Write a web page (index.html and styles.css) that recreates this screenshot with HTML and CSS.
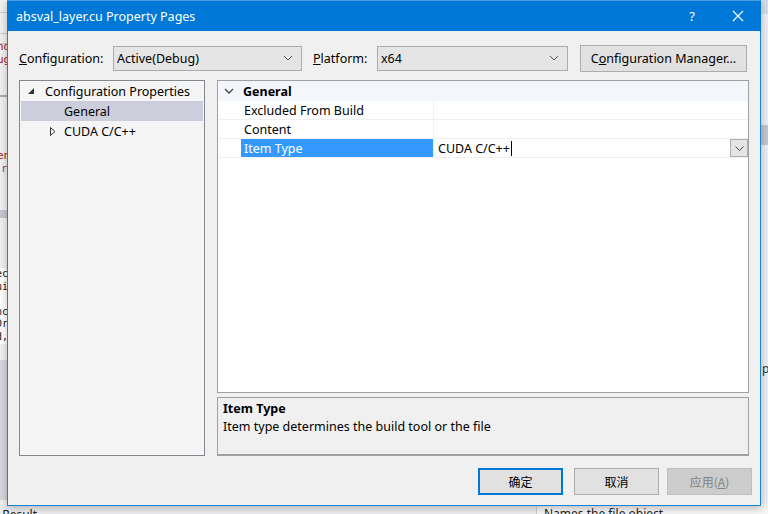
FILE: index.html
```html
<!DOCTYPE html>
<html>
<head>
<meta charset="utf-8">
<link rel="stylesheet" href="styles.css">
</head>
<body>
<div class="desktop">
  <div class="bg-left">
    <div class="bl-line l1"></div>
    <div class="bl-text red t1">nd</div>
    <div class="bl-text red t2">ug</div>
    <div class="bl-line l2"></div>
    <div class="bl-line l3"></div>
    <div class="bl-text red t3">en</div>
    <div class="bl-text purple t4">r</div>
    <div class="bl-bar b1"></div>
    <div class="bl-line l4"></div>
    <div class="bl-code">ec<br>ui<br><br>nc<br>Dr<br>d,</div>
    <div class="bl-gray"></div>
  </div>
  <div class="bg-right">
    <div class="br-top"></div>
    <div class="br-bar"></div>
    <div class="br-text">p</div>
  </div>
  <div class="bg-bottom">
    <span class="bb-left">l Result</span>
    <span class="bb-right">Names the file object</span>
  </div>

  <div class="dialog">
    <div class="titlebar">
      <span class="title">absval_layer.cu Property Pages</span>
      <span class="tb-help">?</span>
      <span class="tb-close"><svg width="12" height="12" viewBox="0 0 12 12"><path d="M1 1L11 11M11 1L1 11" stroke="#fff" stroke-width="1.1" fill="none"/></svg></span>
    </div>

    <div class="toolbar">
      <span class="label"><u>C</u>onfiguration:</span>
      <div class="combo combo-config"><span>Active(Debug)</span><svg class="chev" width="10" height="6" viewBox="0 0 10 6"><path d="M1 1L5 5L9 1" stroke="#555" fill="none"/></svg></div>
      <span class="label label-plat"><u>P</u>latform:</span>
      <div class="combo combo-plat"><span>x64</span><svg class="chev" width="10" height="6" viewBox="0 0 10 6"><path d="M1 1L5 5L9 1" stroke="#555" fill="none"/></svg></div>
      <div class="btn btn-cm">C<u>o</u>nfiguration Manager...</div>
    </div>

    <div class="main">
      <div class="tree">
        <div class="tree-item"><svg class="tri" width="7" height="7" viewBox="0 0 7 7"><path d="M6 0V6H0Z" fill="#333"/></svg><span>Configuration Properties</span></div>
        <div class="tree-item sel child"><span>General</span></div>
        <div class="tree-item child2"><svg class="tri2" width="6" height="9" viewBox="0 0 6 9"><path d="M0.5 0.5L5 4.5L0.5 8.5Z" fill="none" stroke="#333"/></svg><span>CUDA C/C++</span></div>
      </div>
      <div class="right">
        <div class="grid">
          <div class="grid-head"><svg class="hchev" width="10" height="6" viewBox="0 0 10 6"><path d="M1 1L5 5L9 1" stroke="#444" stroke-width="1.3" fill="none"/></svg><span>General</span></div>
          <div class="row"><div class="gut"></div><div class="name">Excluded From Build</div><div class="val"></div></div>
          <div class="row"><div class="gut"></div><div class="name">Content</div><div class="val"></div></div>
          <div class="row rsel"><div class="gut"></div><div class="name nsel">Item Type</div><div class="val vedit"><span>CUDA C/C++</span><span class="caret"></span><div class="ddbtn"><svg width="9" height="5" viewBox="0 0 9 5"><path d="M0.5 0.5L4.5 4.5L8.5 0.5" stroke="#444" fill="none"/></svg></div></div></div>
        </div>
        <div class="desc">
          <div class="desc-title">Item Type</div>
          <div class="desc-text">Item type determines the build tool or the file</div>
        </div>
      </div>
    </div>

    <div class="buttons">
      <div class="btn btn-ok">确定</div>
      <div class="btn btn-cancel">取消</div>
      <div class="btn btn-dis">应用(<u>A</u>)</div>
    </div>
  </div>
</div>
</body>
</html>
```

FILE: styles.css
```css
* { box-sizing: border-box; }
html, body { margin: 0; padding: 0; }
body {
  width: 768px; height: 514px; overflow: hidden;
  font-family: "Noto Sans", "Noto Sans CJK SC", sans-serif;
  font-size: 12px; color: #000;
}
.desktop { position: relative; width: 768px; height: 514px; background: #e9e9ec; overflow: hidden; }

/* background (VS behind dialog) */
.bg-left { position: absolute; left: 0; top: 0; width: 8px; height: 514px; background: #f0f0f0; overflow: hidden; }
.bl-line { position: absolute; left: 0; width: 8px; height: 1px; background: #c8c8c8; }
.l1 { top: 12px; } .l2 { top: 33px; } .l3 { top: 43px; }
.l4 { top: 95px; height: 2px; background: #a8a8b8; }
.bl-text { position: absolute; left: -3px; font-size: 11px; line-height: 12px; font-family: "DejaVu Sans Mono", monospace; }
.red { color: #a31515; } .purple { color: #8b4a8b; }
.t1 { top: 41px; } .t2 { top: 54px; } .t3 { top: 150px; } .t4 { top: 163px; left: 1px; }
.bl-bar { position: absolute; left: 0; top: 210px; width: 8px; height: 8px; background: #c6c6cf; }
.bl-code { position: absolute; left: -4px; top: 268px; width: 12px; font-family: "DejaVu Sans Mono", monospace; font-size: 10px; line-height: 12.6px; background: #fff; color: #222; }
.bl-gray { position: absolute; left: 0; top: 360px; width: 8px; height: 140px; background: #d8d8dc; }
.bg-right { position: absolute; right: 0; top: 0; width: 8px; height: 514px; background: #eeeef2; overflow: hidden; }
.br-top { position: absolute; left: 0; top: 0; width: 8px; height: 14px; background: #d4dde8; }
.br-bar { position: absolute; left: 0; top: 125px; width: 8px; height: 20px; background: #c4c4cf; }
.br-text { position: absolute; left: 2px; top: 360px; font-size: 12px; color: #333; }
.bg-bottom { position: absolute; left: 0; top: 504px; width: 768px; height: 10px; background: #ececef; overflow: hidden; }
.bb-left { position: absolute; left: -4px; top: 2px; font-size: 12px; color: #222; }
.bb-right { position: absolute; left: 536px; top: 0; height: 10px; padding-left: 7px; border-left: 1px solid #ccc; background: #f5f5f5; width: 232px; font-size: 12px; line-height: 20px; color: #222; }

/* dialog window */
.dialog {
  position: absolute; left: 7px; top: 0; width: 754px; height: 506px;
  background: #f0f0f0; border: 1px solid #1883d7; border-top: none;
  box-shadow: 0 2px 8px rgba(0,0,0,0.25);
  display: flex; flex-direction: column;
}
.titlebar {
  height: 31px; background: #0078d7; color: #fff;
  display: flex; align-items: center; padding-left: 9px; margin: 0 -1px;
  border-top: 1px solid #4a9ae0;
}
.title { font-size: 12.5px; flex: 1; }
.tb-help { width: 40px; text-align: center; font-size: 13px; margin-right: 4px; }
.tb-close { width: 44px; display: flex; justify-content: center; margin-right: 1px; }

.toolbar { display: flex; align-items: center; height: 26px; margin-top: 14px; padding-left: 11px; }
.label { width: 94px; font-size: 12.5px; }
.label-plat { width: 64px; margin-left: 11px; }
.combo {
  height: 25px; background: #e5e5e5; border: 1px solid #acacac;
  display: flex; align-items: center; justify-content: space-between;
  padding: 0 8px 0 3px; font-size: 12.5px;
}
.combo-config { width: 189px; }
.combo-plat { width: 191px; }
.btn {
  height: 27px; background: #e1e1e1; border: 1px solid #adadad;
  display: flex; align-items: center; justify-content: center; font-size: 12.5px;
}
.btn-cm { width: 167px; margin-left: 12px; }

.main { display: flex; margin-top: 9px; padding-left: 11px; height: 376px; }
.tree { width: 186px; height: 376px; border: 1px solid #828790; background: #f5f5f5; padding: 0 1px; }
.tree-item { height: 20px; display: flex; align-items: center; font-size: 12.5px; padding-left: 24px; }
.tree-item .tri { margin-right: 10px; margin-left: -17px; margin-top: 1px; }
.tree-item.child { padding-left: 43px; }
.tree-item.child2 { padding-left: 29px; }
.tree-item .tri2 { margin-right: 8px; }
.tree-item.sel { background: #cccedb; }

.right { width: 532px; margin-left: 12px; display: flex; flex-direction: column; }
.grid { height: 313px; border: 1px solid #a0a0a0; background: #fff; }
.grid-head { height: 20px; background: #f3f6fa; display: flex; align-items: center; font-weight: bold; font-size: 12.5px; }
.hchev { margin-left: 6px; margin-right: 9px; }
.row { height: 19px; display: flex; border-bottom: 1px solid #f0f0f0; }
.gut { width: 23px; background: #fff; }
.name { width: 193px; padding-left: 3px; display: flex; align-items: center; font-size: 12.5px; border-right: 1px solid #f0f0f0; }
.nsel { background: #3399ff; color: #fff; }
.val { flex: 1; display: flex; align-items: center; font-size: 12.5px; position: relative; }
.vedit { padding-left: 4px; }
.caret { width: 1px; height: 15px; background: #000; margin-left: 1px; }
.ddbtn {
  position: absolute; right: 0; top: 0; width: 18px; height: 18px;
  background: #e5e5e5; border: 1px solid #adadad;
  display: flex; align-items: center; justify-content: center;
}
.desc { margin-top: 4px; height: 59px; border: 1px solid #a0a0a0; border-bottom-width: 2px; background: #f0f0f0; padding: 2px 5px; }
.desc-title { font-weight: bold; font-size: 12.5px; line-height: 18px; }
.desc-text { font-size: 12.5px; line-height: 18px; }

.buttons { display: flex; justify-content: flex-end; margin-top: 12px; padding-right: 8px; }
.buttons .btn { width: 85px; font-family: "Noto Sans CJK SC", sans-serif; font-size: 12px; }
.btn-ok { border: 2px solid #0078d7; margin-right: 11px; }
.btn-cancel { margin-right: 8px; }
.btn-dis { background: #cccccc; border-color: #bfbfbf; color: #838383; }
```
